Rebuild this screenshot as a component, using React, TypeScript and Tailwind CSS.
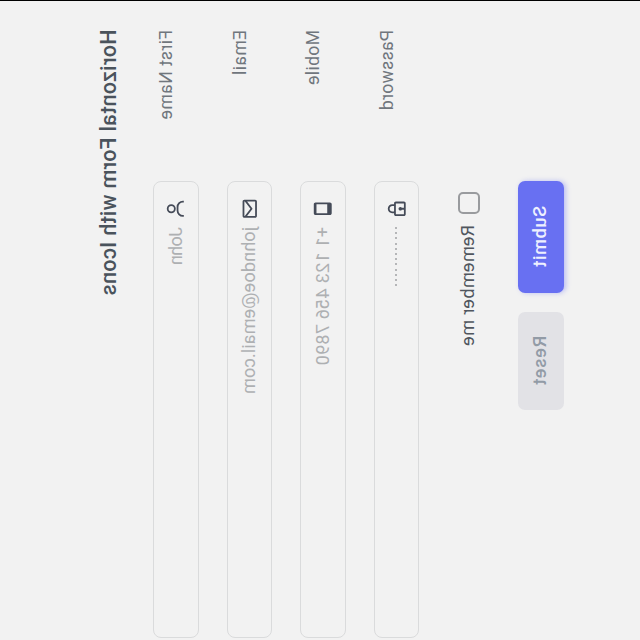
import type { ReactNode } from 'react';
import { BiEnvelope, BiLock, BiMobile, BiUser } from 'react-icons/bi';

type FieldProps = {
  label: string;
  icon: ReactNode;
  children: ReactNode;
};

function Field({ label, icon, children }: FieldProps) {
  return (
    <div className="flex h-[45.6px] shrink-0 pl-[29px]">
      <div className="w-[151px] shrink-0 pt-[3px] text-[17.5px] leading-[20px] tracking-[0.4px] text-[#70767d]">{label}</div>
      <div className="flex w-[457px] shrink-0 items-center rounded-[8px] border border-[#dadbdc] pl-[16px]">
        <span className="flex w-[29px] shrink-0 text-[21.5px] text-[#454b58]">{icon}</span>
        {children}
      </div>
    </div>
  );
}

const placeholder = 'whitespace-nowrap text-[18px] leading-[22px] text-[#aeb0b2]';

export default function App() {
  return (
    <div className="h-[640px] w-[640px] overflow-hidden bg-[#f2f2f2]">
      <div className="flex h-[640px] w-[640px] origin-top-left flex-col overflow-hidden border-l border-black bg-[#f2f2f2] font-['Roboto',sans-serif] [transform:matrix(0,1,1,0,0,0)]">
        <h1 className="mt-[94px] h-[59px] shrink-0 whitespace-nowrap pl-[28.5px] text-[21.5px] font-medium leading-[30px] tracking-[0.28px] text-[#4a535c]">
          Horizontal Form with Icons
        </h1>
        <div className="flex flex-col gap-[28px]">
          <Field label="First Name" icon={<BiUser />}>
            <span className={`${placeholder} tracking-[-0.6px]`}>John</span>
          </Field>
          <Field label="Email" icon={<BiEnvelope />}>
            <span className={`${placeholder} tracking-[0.15px]`}>johndoe@email.com</span>
          </Field>
          <Field label="Mobile" icon={<BiMobile />}>
            <span className={`${placeholder} tracking-[0.24px]`}>+1 123 456 7890</span>
          </Field>
          <Field label="Password" icon={<BiLock />}>
            <span className="-mt-[1px] flex gap-[3.2px]">
              {Array.from({ length: 12 }, (_, i) => (
                <i key={i} className="size-[2px] rounded-full bg-[#a0a2a4]" />
              ))}
            </span>
          </Field>
        </div>
        <label className="mt-[39px] flex h-[21px] shrink-0 items-center pl-[191px]">
          <span className="size-[22px] shrink-0 rounded-[5px] border-[2px] border-[#999b9e]" />
          <span className="-mt-[2px] ml-[11px] whitespace-nowrap text-[18px] leading-[22px] tracking-[0.35px] text-[#50565e]">Remember me</span>
        </label>
        <div className="mt-[39px] flex shrink-0 gap-[19px] pl-[180px]">
          <button className="h-[45.6px] w-[111.5px] rounded-[7px] bg-[#6870f2] pb-[3px] text-[18px] font-medium tracking-[0.8px] text-[#eef0ff] shadow-[0_2px_5px_rgba(104,112,242,0.4)]">Submit</button>
          <button className="h-[45.6px] w-[98.5px] rounded-[7px] bg-[#e2e2e6] pb-[3px] text-[18px] font-medium tracking-[0.8px] text-[#929ba6]">Reset</button>
        </div>
      </div>
    </div>
  );
}
